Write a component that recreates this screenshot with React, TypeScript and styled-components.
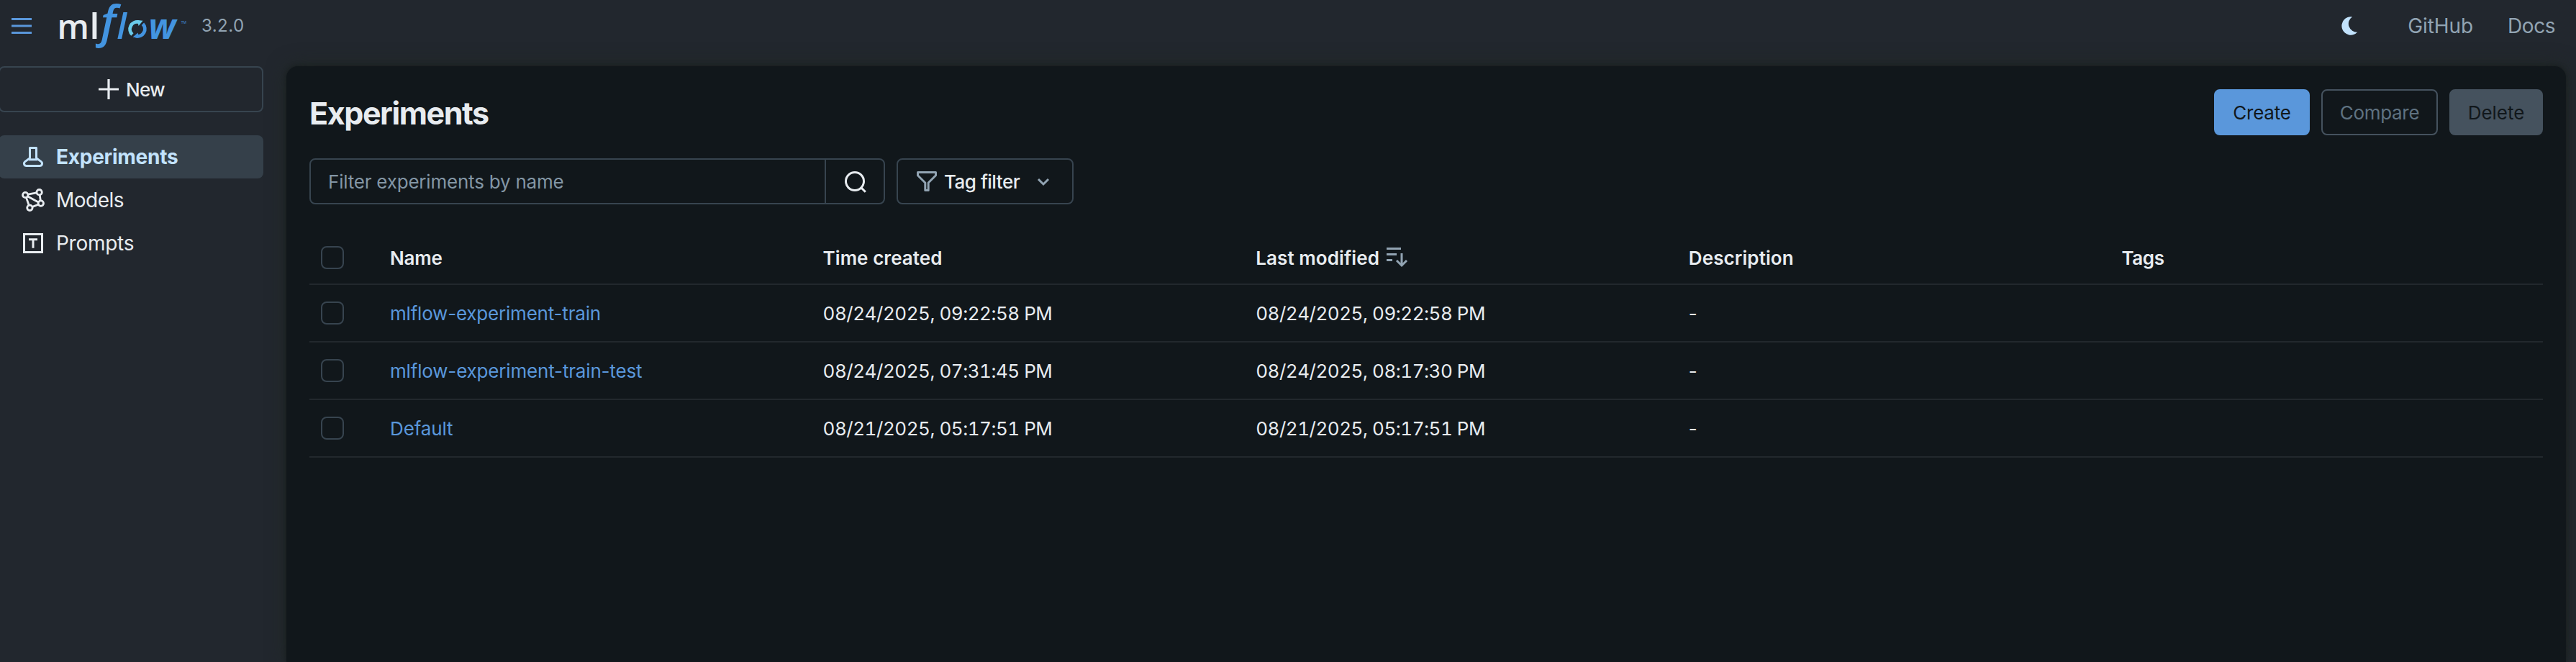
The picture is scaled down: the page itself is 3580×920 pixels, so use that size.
import React from 'react';
import styled, { createGlobalStyle } from 'styled-components';

const color = {
  shell: '#22272e',
  surface: '#11171b',
  text: '#e8ecf0',
  muted: '#92a4b3',
  placeholder: '#8396a5',
  border: '#37444f',
  line: '#22282d',
  blue: '#5a97db',
  selected: '#35404a',
  selectedText: '#c2e2fc',
  disabled: '#45525e',
  disabledText: '#5f7281',
};

const GlobalStyle = createGlobalStyle`
  * { box-sizing: border-box; }
  body {
    margin: 0;
    background: ${color.shell};
    color: ${color.text};
    font-family: Inter, 'Liberation Sans', sans-serif;
    font-size: 26px;
    overflow: hidden;
  }
  button { font: inherit; color: inherit; background: none; margin: 0; padding: 0; }
`;

const Shell = styled.div`
  display: flex;
  flex-direction: column;
  height: 920px;
  overflow: hidden;
`;

const TopBar = styled.header`
  display: flex;
  align-items: center;
  flex: none;
  height: 72px;
  padding: 0 29px 0 14px;
`;

const Icon = styled.svg`
  display: block;
  flex: none;
  width: 32px;
  height: 32px;
`;

const LogoSvg = styled.svg`
  display: block;
  flex: none;
  width: 180px;
  height: 72px;
  margin-left: 34px;
  overflow: visible;
  font-family: 'Open Sans', 'Noto Sans', sans-serif;
  font-weight: 600;
`;

const Version = styled.span`
  margin: 0 auto 2px 20px;
  color: ${color.muted};
  font-size: 24px;
  letter-spacing: 0.46px;
`;

const TopLink = styled.a<{ $gap: number; $spacing: number }>`
  margin-left: ${(p) => p.$gap}px;
  color: ${color.muted};
  font-size: 28px;
  letter-spacing: ${(p) => p.$spacing}px;
`;

const Body = styled.div`
  display: flex;
  flex: 1;
  align-items: stretch;
  padding: 20px 14px 0 0;
`;

const Sidebar = styled.nav`
  flex: none;
  width: 368px;
  margin: 0 32px 0 -2px;
`;

const NewButton = styled.button`
  display: flex;
  align-items: center;
  justify-content: center;
  gap: 8px;
  width: 100%;
  height: 64px;
  margin-bottom: 32px;
  border: 2px solid ${color.border};
  border-radius: 8px;
  letter-spacing: -0.7px;
  font-weight: 500;
`;

const NavItem = styled.a<{ $active?: boolean; $spacing: number }>`
  display: flex;
  align-items: center;
  gap: 16px;
  height: 60px;
  padding-left: 32px;
  border-radius: 8px;
  font-size: 28px;
  font-weight: ${(p) => (p.$active ? 650 : 400)};
  letter-spacing: ${(p) => p.$spacing}px;
  color: ${(p) => (p.$active ? color.selectedText : color.text)};
  background: ${(p) => (p.$active ? color.selected : 'transparent')};
`;

const Panel = styled.main`
  flex: 1;
  padding: 32px;
  border-radius: 16px 16px 0 0;
  background: ${color.surface};
  box-shadow: 0 0 6px rgba(12, 18, 18, 0.55), 0 0 28px rgba(32, 40, 36, 0.9);
`;

const TitleRow = styled.div`
  display: flex;
  align-items: center;
  gap: 16px;
  height: 64px;
`;

const Title = styled.h1`
  margin: 2px auto 0 0;
  font-size: 43px;
  font-weight: 700;
  letter-spacing: -1.42px;
`;

const Action = styled.button<{ $kind: 'primary' | 'outline' | 'disabled'; $width: number; $spacing: number }>`
  width: ${(p) => p.$width}px;
  height: 64px;
  border-radius: 8px;
  border: 2px solid ${(p) => (p.$kind === 'primary' ? color.blue : color.disabled)};
  background: ${(p) => ({ primary: color.blue, outline: 'transparent', disabled: color.disabled })[p.$kind]};
  color: ${(p) => (p.$kind === 'outline' ? color.disabledText : color.surface)};
  letter-spacing: ${(p) => p.$spacing}px;
`;

const FilterRow = styled.div`
  display: flex;
  gap: 16px;
  height: 64px;
  margin: 32px 0 38px;
`;

const SearchGroup = styled.div`
  display: flex;
  width: 800px;
  border: 2px solid ${color.border};
  border-radius: 8px;
`;

const SearchInput = styled.input`
  flex: 1;
  min-width: 0;
  padding: 0 24px;
  border: 0;
  outline: 0;
  background: transparent;
  color: ${color.text};
  font: inherit;
  letter-spacing: -0.21px;
  &::placeholder { color: ${color.placeholder}; opacity: 1; }
`;

const SearchButton = styled.button`
  display: flex;
  align-items: center;
  justify-content: center;
  width: 82px;
  border: 0;
  border-left: 2px solid ${color.border};
`;

const TagFilterButton = styled.button`
  display: flex;
  align-items: center;
  gap: 8px;
  width: 246px;
  padding: 0 24px;
  border: 2px solid ${color.border};
  border-radius: 8px;
  font-weight: 500;
  letter-spacing: -0.5px;
`;

const TagFilterLabel = styled.span`
  margin-right: auto;
`;

const Row = styled.div<{ $header?: boolean }>`
  display: grid;
  grid-template-columns: 96px repeat(5, 1fr);
  align-items: center;
  height: ${(p) => (p.$header ? 74 : 80)}px;
  border-bottom: 2px solid ${color.line};
`;

const Checkbox = styled.span`
  width: 32px;
  height: 32px;
  margin-left: 16px;
  border: 2px solid ${color.border};
  border-radius: 8px;
`;

const Cell = styled.div<{ $spacing?: number }>`
  display: flex;
  align-items: center;
  gap: 8px;
  padding: 0 16px;
  white-space: nowrap;
  letter-spacing: ${(p) => p.$spacing ?? 0}px;
`;

const HeadCell = styled(Cell)`
  font-weight: 600;
`;

const LinkCell = styled(Cell)`
  color: ${color.blue};
`;

const DateCell = styled(Cell)`
  font-variant-numeric: tabular-nums;
  letter-spacing: -0.48px;
`;

const MenuIcon = () => (
  <Icon viewBox="0 0 32 32" fill={color.blue}>
    <rect x="2" y="5" width="28" height="3" />
    <rect x="2" y="14.5" width="28" height="3" />
    <rect x="2" y="24" width="28" height="3" />
  </Icon>
);

const Logo = () => (
  <LogoSvg viewBox="0 0 180 72" aria-label="mlflow">
    <text x="-0.6" y="53.7" fontSize="46.5" fill={color.text}>m</text>
    <text x="44.4" y="53.7" fontSize="49.5" fill={color.text}>l</text>
    <g fill="#4394e0" fontStyle="italic">
      <text x="59.8" y="52" fontSize="62">f</text>
      <text x="82.2" y="53.7" fontSize="49.5">l</text>
      <text x="126.5" y="53.7" fontSize="48" fontWeight="700">w</text>
      <text x="171.7" y="32.5" fontSize="5" fontStyle="normal" fontWeight="400">TM</text>
    </g>
    <path d="M103.9 48 A10.1 10.1 0 0 1 113 30.7" fill="none" stroke="#6bcbea" strokeWidth="4.8" />
    <path d="M110.8 28.1 L118.6 28.8 L112.6 36z" fill="#6bcbea" />
    <path d="M118.4 33.2 A10.1 10.1 0 0 1 108.8 50.1" fill="none" stroke="#4394e0" strokeWidth="4.8" />
    <path d="M111.8 45.4 L104.6 51.6 L112.4 52.8z" fill="#4394e0" />
  </LogoSvg>
);

const MoonIcon = () => (
  <Icon viewBox="0 0 32 32">
    <path d="M19 3.4 A12.7 12.7 0 1 0 26.4 24.6 A11.6 11.6 0 0 1 19 3.4z" fill={color.selectedText} />
  </Icon>
);

const PlusIcon = () => (
  <Icon viewBox="0 0 16 16" fill="none" stroke="currentColor" strokeWidth="1.6">
    <path d="M8 1v14M1 8h14" />
  </Icon>
);

const BeakerIcon = () => (
  <Icon viewBox="0 0 16 16" fill="none" stroke="currentColor" strokeWidth="1.5">
    <path d="M5.75 1.75h4.5V8.9l3.2 2.3c1.5 1.1 .8 3.05-.9 3.05H3.45c-1.7 0-2.4-1.95-.9-3.05l3.2-2.3z" strokeLinejoin="round" />
    <path d="M5 9.9h6" />
  </Icon>
);

const ModelsIcon = () => (
  <Icon viewBox="0 0 16 16" fill="none" stroke="currentColor" strokeWidth="1.4">
    <circle cx="2.6" cy="4.5" r="1.85" />
    <circle cx="12.3" cy="2.6" r="1.85" />
    <circle cx="13.4" cy="10.3" r="1.85" />
    <circle cx="5.7" cy="13.4" r="1.85" />
    <path d="M4.4 4.1l6-1.2M4.1 5.4l7.8 4.2M3.2 6.2l1.9 5.4M12.6 4.4l.6 4.2M7.5 12.7l4.2-1.6" />
  </Icon>
);

const PromptsIcon = () => (
  <Icon viewBox="0 0 16 16" fill="none" stroke="currentColor" strokeWidth="1.5">
    <path d="M1.75 1.75h12.5v12.5H1.75zM5 5.4h6M8 5.4v6" />
  </Icon>
);

const SearchIcon = () => (
  <Icon viewBox="0 0 16 16" fill="none" stroke="currentColor" strokeWidth="1.5">
    <circle cx="8" cy="8" r="6.25" />
    <path d="M12.2 12.2l3.2 3.2" />
  </Icon>
);

const FunnelIcon = () => (
  <Icon viewBox="0 0 16 16" fill="none" stroke={color.muted} strokeWidth="1.5" strokeLinejoin="round">
    <path d="M1.75 1.75h12.5v2.1L9.1 9v5.25H6.9V9L1.75 3.85z" />
  </Icon>
);

const ChevronIcon = () => (
  <Icon viewBox="0 0 16 16" fill="none" stroke={color.muted} strokeWidth="1.5">
    <path d="M4.5 6.5L8 10l3.5-3.5" />
  </Icon>
);

const SortIcon = () => (
  <Icon viewBox="0 0 32 32" fill="none" stroke={color.muted} strokeWidth="3">
    <path d="M2 3.5h20M2 11.5h14M2 19.5h8M23 10v17M16 20l7 7 7-7" />
  </Icon>
);

const experiments = [
  { name: 'mlflow-experiment-train', spacing: -0.2, created: '08/24/2025, 09:22:58 PM', modified: '08/24/2025, 09:22:58 PM' },
  { name: 'mlflow-experiment-train-test', spacing: -0.17, created: '08/24/2025, 07:31:45 PM', modified: '08/24/2025, 08:17:30 PM' },
  { name: 'Default', spacing: -0.13, created: '08/21/2025, 05:17:51 PM', modified: '08/21/2025, 05:17:51 PM' },
];

export default function App() {
  return (
    <Shell>
      <GlobalStyle />
      <TopBar>
        <MenuIcon />
        <Logo />
        <Version>3.2.0</Version>
        <MoonIcon />
        <TopLink $gap={64} $spacing={-0.08}>GitHub</TopLink>
        <TopLink $gap={48} $spacing={-0.46}>Docs</TopLink>
      </TopBar>
      <Body>
        <Sidebar>
          <NewButton><PlusIcon />New</NewButton>
          <NavItem $active $spacing={-0.25}><BeakerIcon />Experiments</NavItem>
          <NavItem $spacing={-0.5}><ModelsIcon />Models</NavItem>
          <NavItem $spacing={-0.27}><PromptsIcon />Prompts</NavItem>
        </Sidebar>
        <Panel>
          <TitleRow>
            <Title>Experiments</Title>
            <Action $kind="primary" $width={133} $spacing={-0.24}>Create</Action>
            <Action $kind="outline" $width={162} $spacing={-0.31}>Compare</Action>
            <Action $kind="disabled" $width={130} $spacing={-0.05}>Delete</Action>
          </TitleRow>
          <FilterRow>
            <SearchGroup>
              <SearchInput placeholder="Filter experiments by name" />
              <SearchButton aria-label="Search"><SearchIcon /></SearchButton>
            </SearchGroup>
            <TagFilterButton>
              <FunnelIcon />
              <TagFilterLabel>Tag filter</TagFilterLabel>
              <ChevronIcon />
            </TagFilterButton>
          </FilterRow>
          <Row $header>
            <Checkbox />
            <HeadCell $spacing={-0.23}>Name</HeadCell>
            <HeadCell $spacing={0.05}>Time created</HeadCell>
            <HeadCell $spacing={0.1}>Last modified<SortIcon /></HeadCell>
            <HeadCell $spacing={0.1}>Description</HeadCell>
            <HeadCell $spacing={-0.4}>Tags</HeadCell>
          </Row>
          {experiments.map((e) => (
            <Row key={e.name}>
              <Checkbox />
              <LinkCell $spacing={e.spacing}>{e.name}</LinkCell>
              <DateCell>{e.created}</DateCell>
              <DateCell>{e.modified}</DateCell>
              <Cell>-</Cell>
              <Cell />
            </Row>
          ))}
        </Panel>
      </Body>
    </Shell>
  );
}
